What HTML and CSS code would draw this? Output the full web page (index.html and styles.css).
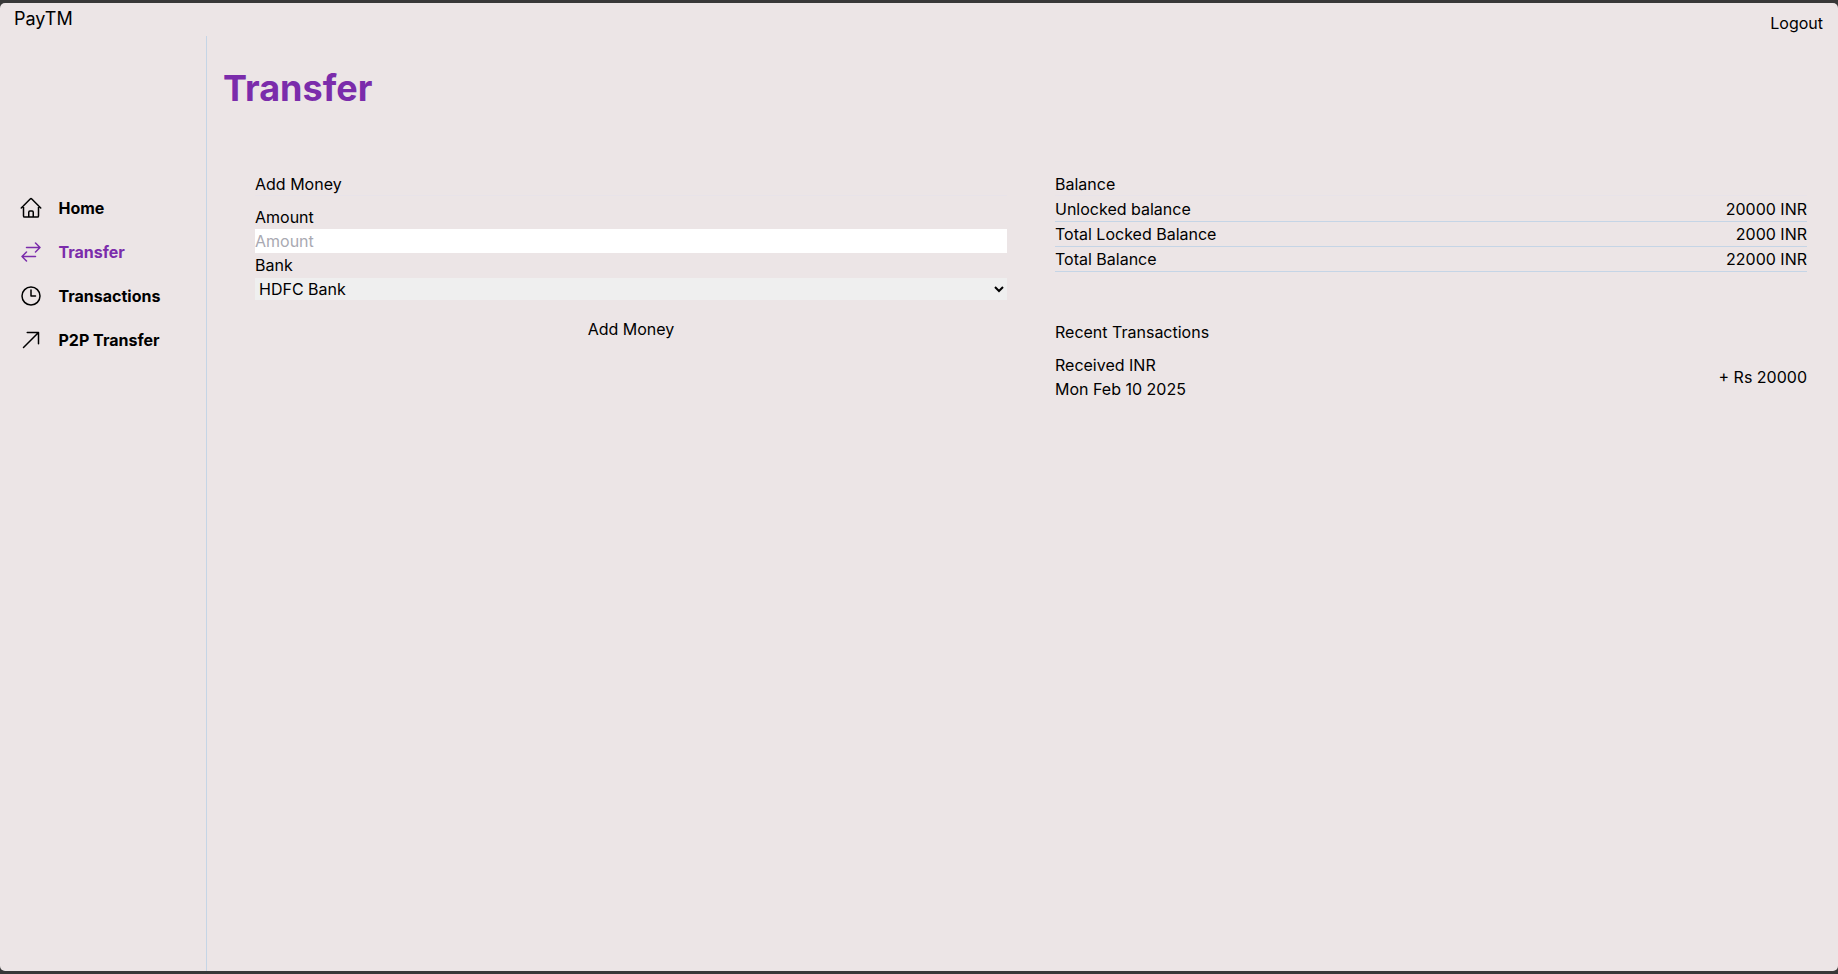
FILE: index.html
```html
<!DOCTYPE html>
<html lang="en">
<head>
<meta charset="utf-8">
<title>PayTM</title>
<link rel="stylesheet" href="styles.css">
</head>
<body>
<div class="window">
  <header class="topbar">
    <div class="brand">PayTM</div>
    <button class="logout">Logout</button>
  </header>
  <div class="shell">
    <aside class="sidebar">
      <nav class="nav">
        <a class="nav-item">
          <svg class="nav-icon" viewBox="0 0 24 24" fill="none" stroke="currentColor" stroke-width="1.5" stroke-linecap="round" stroke-linejoin="round"><path d="m2.25 12 8.954-8.955c.44-.439 1.152-.439 1.591 0L21.75 12M4.5 9.75v10.125c0 .621.504 1.125 1.125 1.125H9.75v-4.875c0-.621.504-1.125 1.125-1.125h2.25c.621 0 1.125.504 1.125 1.125V21h4.125c.621 0 1.125-.504 1.125-1.125V9.75M8.25 21h8.25"/></svg>
          <span>Home</span>
        </a>
        <a class="nav-item is-active">
          <svg class="nav-icon" viewBox="0 0 24 24" fill="none" stroke="currentColor" stroke-width="1.5" stroke-linecap="round" stroke-linejoin="round"><path d="M7.5 21 3 16.5m0 0L7.5 12M3 16.5h13.5m0-13.5L21 7.5m0 0L16.5 12M21 7.5H7.5"/></svg>
          <span>Transfer</span>
        </a>
        <a class="nav-item">
          <svg class="nav-icon" viewBox="0 0 24 24" fill="none" stroke="currentColor" stroke-width="1.5" stroke-linecap="round" stroke-linejoin="round"><path d="M12 6v6h4.5m4.5 0a9 9 0 1 1-18 0 9 9 0 0 1 18 0Z"/></svg>
          <span>Transactions</span>
        </a>
        <a class="nav-item">
          <svg class="nav-icon" viewBox="0 0 24 24" fill="none" stroke="currentColor" stroke-width="1.5" stroke-linecap="round" stroke-linejoin="round"><path d="m4.5 19.5 15-15m0 0H8.25m11.25 0v11.25"/></svg>
          <span>P2P Transfer</span>
        </a>
      </nav>
    </aside>
    <main class="main">
      <h1 class="title">Transfer</h1>
      <div class="columns">
        <section class="card">
          <h2 class="card-title">Add Money</h2>
          <div class="form">
            <label class="label" for="amount">Amount</label>
            <input class="input" id="amount" type="text" placeholder="Amount">
            <label class="label label-bank" for="bank">Bank</label>
            <select class="select" id="bank">
              <option>HDFC Bank</option>
              <option>Axis Bank</option>
            </select>
            <div class="actions"><button class="add-btn">Add Money</button></div>
          </div>
        </section>
        <div class="stack">
          <section class="card">
            <h2 class="card-title card-title-balance">Balance</h2>
            <div class="row"><span>Unlocked balance</span><span>20000 INR</span></div>
            <div class="row"><span>Total Locked Balance</span><span>2000 INR</span></div>
            <div class="row"><span>Total Balance</span><span>22000 INR</span></div>
          </section>
          <section class="card recent">
            <h2 class="card-title-recent">Recent Transactions</h2>
            <div class="txn">
              <div>
                <div class="txn-line">Received INR</div>
                <div class="txn-line">Mon Feb 10 2025</div>
              </div>
              <div class="txn-amount">+ Rs 20000</div>
            </div>
          </section>
        </div>
      </div>
    </main>
  </div>
</div>
</body>
</html>
```
FILE: styles.css
```css
* { box-sizing: border-box; }
html, body { height: 100%; }
body {
  margin: 0;
  background: #383838;
  padding: 3px 0;
  font-family: Inter, "Liberation Sans", sans-serif;
  font-size: 16px;
  line-height: 24px;
  color: #000;
  overflow: hidden;
}
.window {
  height: 968px;
  background: #ece5e6;
  border-radius: 5px;
  display: flex;
  flex-direction: column;
}
.topbar {
  height: 33px;
  display: flex;
  justify-content: space-between;
  padding: 0 15px 0 14px;
}
.brand { font-size: 18px; line-height: 26px; padding-top: 3px; }
.logout {
  background: none;
  border: 0;
  padding: 7px 0 0;
  font: inherit;
  color: inherit;
  height: 33px;
}
.shell { flex: 1; display: flex; min-height: 0; }
.sidebar {
  width: 207px;
  border-right: 1px solid #c5d5e6;
  padding-top: 160px;
}
.nav { display: flex; flex-direction: column; gap: 20px; }
.nav-item {
  display: flex;
  align-items: center;
  gap: 16px;
  height: 24px;
  padding-left: 18.5px;
  font-weight: 700;
}
.nav-item.is-active { color: #7b2cab; }
.nav-icon { width: 24px; height: 24px; flex: none; }
.main { flex: 1; padding: 0 31px 0 17px; min-width: 0; }
.title {
  margin: 0 0 0 -1px;
  padding-top: 32px;
  font-size: 36px;
  line-height: 40px;
  font-weight: 700;
  color: #7b2cab;
}
.columns {
  display: grid;
  grid-template-columns: 1fr 1fr;
  gap: 48px;
  padding: 0 0 0 31px;
  margin-top: 64px;
}
.card-title {
  margin: 0;
  font-size: 16px;
  font-weight: 400;
  line-height: 24px;
  height: 24px;
  border-bottom: 1px solid #e8e3e9;
}
.card-title-balance { margin-bottom: 1px; }
.form { display: flex; flex-direction: column; padding-top: 9px; }
.label { line-height: 24px; display: block; height: 24px; }
.label-bank { height: 25px; }
.input {
  height: 24px;
  border: 0;
  padding: 0;
  background: #fff;
  font: inherit;
  color: #000;
  outline: 0;
  width: 100%;
}
.input::placeholder { color: #a9a9b2; opacity: 1; }
.select {
  height: 22px;
  border: 0;
  background: #efefef;
  font: inherit;
  color: #000;
  width: 100%;
  padding: 0;
  border-radius: 0;
}
.actions { display: flex; justify-content: center; padding-top: 17px; }
.add-btn {
  background: none;
  border: 0;
  padding: 0;
  font: inherit;
  color: inherit;
}
.row {
  display: flex;
  justify-content: space-between;
  height: 25px;
  line-height: 24px;
  border-bottom: 1px solid #c5d5e6;
}
.recent { margin-top: 48px; }
.card-title-recent { margin: 0; font-size: 16px; font-weight: 400; line-height: 24px; }
.txn {
  display: flex;
  justify-content: space-between;
  align-items: center;
  padding-top: 9px;
}
.txn-line { line-height: 24px; }
```
